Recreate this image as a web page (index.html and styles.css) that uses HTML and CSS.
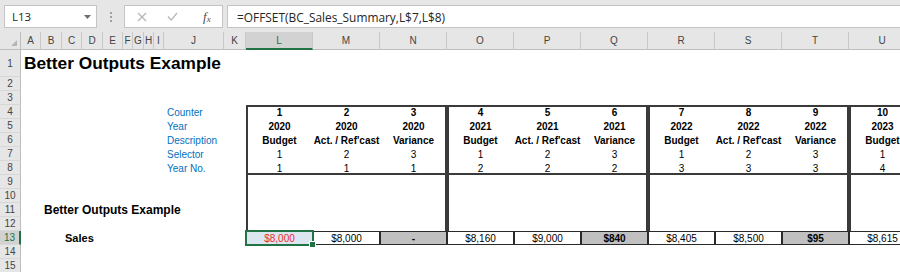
FILE: index.html
```html
<!DOCTYPE html>
<html lang="en">
<head>
    <meta charset="UTF-8">
    <title>Better Outputs Example</title>
    <link rel="stylesheet" href="styles.css">
</head>
<body>
    <!-- Formula bar -->
    <div class="formula-bar">
        <div class="name-box">
            <span>L13</span>
            <svg width="7" height="4" viewBox="0 0 7 4"><path d="M0 0h7L3.5 4z" fill="#6e6e6e"/></svg>
        </div>
        <div class="grip"><i></i><i></i><i></i></div>
        <div class="fx-buttons">
            <svg class="btn-x" width="10" height="10" viewBox="0 0 10 10"><path d="M1 1l8 8M9 1l-8 8" stroke="#b4b4b4" stroke-width="1.2" fill="none"/></svg>
            <svg class="btn-ok" width="11" height="9" viewBox="0 0 11 9"><path d="M1 4.5l3.2 3.6L10 1" stroke="#b4b4b4" stroke-width="1.2" fill="none"/></svg>
            <span class="fx">f<sub>x</sub></span>
        </div>
        <div class="formula-input">=OFFSET(BC_Sales_Summary,L$7,L$8)</div>
    </div>

    <!-- Worksheet -->
    <div class="sheet" id="sheet"></div>

    <script>
        const sheet = document.getElementById('sheet');
        const letters = 'ABCDEFGHIJKLMNOPQRSTU'.split('');

        // sheet row r sits on grid row r + 1, column letter on index + 2
        const R = r => r + 1;
        const C = l => letters.indexOf(l) + 2;

        function put(row, col, text, cls) {
            const el = document.createElement('div');
            el.className = cls;
            if (text !== '') el.textContent = text;
            el.style.gridRow = row;
            el.style.gridColumn = col;
            sheet.appendChild(el);
            return el;
        }

        // headers
        put(1, 1, '', 'corner');
        letters.forEach((l, i) => put(1, i + 2, l, 'col-head' + (l === 'L' ? ' active' : '')));
        for (let r = 1; r <= 15; r++) {
            put(R(r), 1, r, 'row-head' + (r === 13 ? ' active' : ''));
        }

        // text labels
        put(R(1), C('A') + ' / span 11', 'Better Outputs Example', 'title');
        ['Counter', 'Year', 'Description', 'Selector', 'Year No.'].forEach((t, i) => {
            put(R(4 + i), C('J') + ' / span 2', t, 'label');
        });
        put(R(11), C('B') + ' / span 10', 'Better Outputs Example', 'subtitle');
        put(R(13), C('C') + ' / span 8', 'Sales', 'row-label');

        // counter, year, description, selector, year no., sales
        const periods = [
            [1, 2020, 'Budget', 1, 1, '$8,000'],
            [2, 2020, "Act. / Ref'cast", 2, 1, '$8,000'],
            [3, 2020, 'Variance', 3, 1, '-'],
            [4, 2021, 'Budget', 1, 2, '$8,160'],
            [5, 2021, "Act. / Ref'cast", 2, 2, '$9,000'],
            [6, 2021, 'Variance', 3, 2, '$840'],
            [7, 2022, 'Budget', 1, 3, '$8,405'],
            [8, 2022, "Act. / Ref'cast", 2, 3, '$8,500'],
            [9, 2022, 'Variance', 3, 3, '$95'],
            [10, 2023, 'Budget', 1, 4, '$8,615']
        ];

        periods.forEach((p, i) => {
            const col = C('L') + i;
            put(R(4), col, p[0], 'val b');
            put(R(5), col, p[1], 'val b');
            put(R(6), col, p[2], 'val b');
            put(R(7), col, p[3], 'val');
            put(R(8), col, p[4], 'val');

            let cls = 'amt';
            if (p[2] === 'Variance') cls += ' var';
            if (i === 0) cls += ' sel';
            put(R(13), col, p[5], cls);
        });

        // group outlines, three periods per year
        for (let g = 0; g < 4; g++) {
            const col = (C('L') + g * 3) + ' / span 3';
            put(R(4) + ' / span 5', col, '', 'frame');
            put(R(9) + ' / span 4', col, '', 'frame open');
        }
    </script>
</body>
</html>
```

FILE: styles.css
```css
:root {
    --excel-green: #217346;
    --header-bg: #e6e6e6;
    --header-line: #c4c4c4;
    --label-blue: #0070c0;
}

body {
    margin: 0;
    padding: 0;
    width: 900px;
    height: 272px;
    overflow: hidden;
    background: #fff;
}

/* formula bar */

.formula-bar {
    display: flex;
    align-items: stretch;
    height: 32px;
    box-sizing: border-box;
    padding: 5px 0 4px 4px;
    background: var(--header-bg);
    font-family: "Open Sans", "Noto Sans", sans-serif;
    font-size: 11.5px;
    color: #262626;
}

.name-box {
    width: 93px;
    box-sizing: border-box;
    display: flex;
    align-items: center;
    justify-content: space-between;
    padding: 0 5px 0 7px;
    background: #fff;
    border: 1px solid var(--header-line);
}

.grip {
    width: 27px;
    display: flex;
    flex-direction: column;
    align-items: center;
    justify-content: center;
    gap: 2px;
}

.grip i {
    width: 2px;
    height: 2px;
    background: #a0a0a0;
}

.fx-buttons {
    width: 99px;
    box-sizing: border-box;
    display: flex;
    align-items: center;
    padding-left: 12px;
    background: #fff;
    border: 1px solid var(--header-line);
}

.btn-ok {
    margin-left: 20px;
}

.fx {
    margin-left: 25px;
    font-family: "Liberation Serif", serif;
    font-style: italic;
    font-size: 13px;
    color: #505050;
}

.fx sub {
    font-size: 9px;
    vertical-align: -1px;
}

.formula-input {
    flex: 1;
    display: flex;
    align-items: center;
    margin-left: 4px;
    padding-left: 9px;
    font-size: 11.9px;
    background: #fff;
    border: 1px solid var(--header-line);
    border-right: none;
}

/* worksheet grid */

.sheet {
    display: grid;
    grid-template-columns: 21px 20px 21px 20px 21px 20px 10px 11px 10px 10px 60px 22px repeat(12, 67px);
    grid-template-rows: 18px 27px repeat(14, 14px);
    font-family: "Liberation Sans", Arial, sans-serif;
    font-size: 10px;
    color: #000;
}

.corner,
.col-head,
.row-head {
    box-sizing: border-box;
    display: flex;
    align-items: center;
    justify-content: center;
    background: var(--header-bg);
    color: #444;
}

.corner {
    position: relative;
    border-right: 1px solid #bdbdbd;
    border-bottom: 1px solid #bdbdbd;
}

.corner::after {
    content: "";
    position: absolute;
    right: 3px;
    bottom: 3px;
    border-left: 6px solid transparent;
    border-bottom: 6px solid #b5b5b5;
}

.col-head {
    border-right: 1px solid #c8c8c8;
    border-bottom: 1px solid #bdbdbd;
}

.row-head {
    border-right: 1px solid #bdbdbd;
    border-bottom: 1px solid #d7d7d7;
}

.col-head.active {
    background: #d2d2d2;
    color: var(--excel-green);
    border-bottom: 2px solid var(--excel-green);
}

.row-head.active {
    background: #d2d2d2;
    color: var(--excel-green);
    border-right: 2px solid var(--excel-green);
}

.title {
    display: flex;
    align-items: center;
    padding-left: 3px;
    font-size: 17.3px;
    font-weight: bold;
    white-space: nowrap;
}

.label {
    display: flex;
    align-items: center;
    padding-left: 3px;
    color: var(--label-blue);
    white-space: nowrap;
}

.subtitle,
.row-label {
    display: flex;
    align-items: center;
    padding-left: 3px;
    font-weight: bold;
    white-space: nowrap;
}

.subtitle {
    font-size: 12px;
}

.row-label {
    font-size: 11px;
}

.val {
    display: flex;
    align-items: center;
    justify-content: center;
    white-space: nowrap;
}

.b {
    font-weight: bold;
}

.frame {
    box-sizing: border-box;
    border: 2px solid #3a3a3a;
}

.frame.open {
    border-top: none;
    border-bottom: none;
}

.amt {
    box-sizing: border-box;
    display: flex;
    align-items: center;
    justify-content: center;
    border: 1px solid #2a2a2a;
    background: #fff;
}

.amt.var {
    background: #c0c0c0;
    font-weight: bold;
}

.amt.sel {
    position: relative;
    background: #dce6f1;
    color: #f02a2a;
    outline: 2px solid var(--excel-green);
    outline-offset: -1px;
}

.amt.sel::after {
    content: "";
    position: absolute;
    right: -4px;
    bottom: -4px;
    width: 5px;
    height: 5px;
    background: var(--excel-green);
    border: 1px solid #fff;
}
```
